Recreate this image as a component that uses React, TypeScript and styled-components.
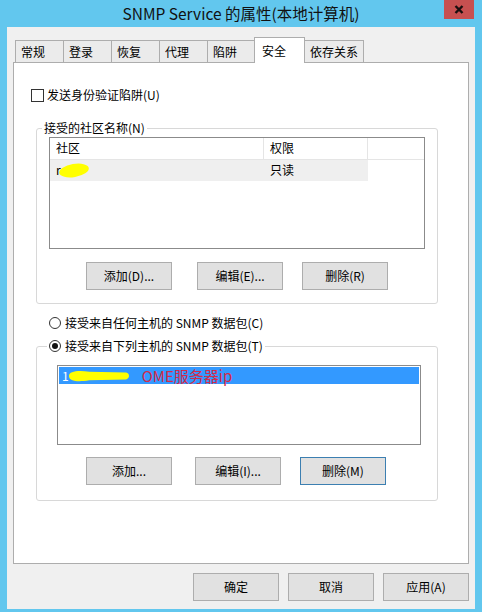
import React from "react";
import styled, { createGlobalStyle } from "styled-components";

const GlobalStyle = createGlobalStyle`
  html, body {
    margin: 0;
    padding: 0;
    width: 482px;
    height: 612px;
    overflow: hidden;
    background: #62c7ee;
  }
  body {
    font-family: "Noto Sans CJK SC", "Noto Sans", sans-serif;
    font-size: 12px;
    color: #000;
  }
  * { box-sizing: border-box; }
`;

const Window = styled.div`
  width: 482px;
  height: 612px;
  background: #62c7ee;
  padding: 0 7px 3px;
  display: flex;
  flex-direction: column;
`;

const TitleBar = styled.div`
  height: 27px;
  display: grid;
  grid-template-columns: 1fr auto 1fr;
  align-items: start;
`;

const Title = styled.div`
  grid-column: 2;
  font-size: 15.5px;
  line-height: 26px;
  color: #111;
  white-space: nowrap;
`;

const CloseButton = styled.div`
  grid-column: 3;
  justify-self: end;
  margin-right: 1px;
  width: 30px;
  height: 19px;
  background: #c75050;
  display: flex;
  align-items: center;
  justify-content: center;
`;

const Client = styled.div`
  flex: 1;
  background: #f0f0f0;
  padding: 10px 6px 8px;
  display: flex;
  flex-direction: column;
`;

const TabStrip = styled.div`
  height: 25px;
  display: flex;
  align-items: flex-end;
  padding-left: 2px;
  position: relative;
  z-index: 1;
`;

const Tab = styled.div<{ $active?: boolean }>`
  position: relative;
  height: ${(p) => (p.$active ? 26 : 22)}px;
  min-width: ${(p) => (p.$active ? 51 : 49)}px;
  margin-left: ${(p) => (p.$active ? -2 : -1)}px;
  margin-bottom: ${(p) => (p.$active ? -1 : 0)}px;
  padding: ${(p) => (p.$active ? "4px 4px 0 7px" : "2px 5px 0 5px")};
  border: 1px solid #adadad;
  border-bottom: none;
  background: ${(p) => (p.$active ? "#ffffff" : "#ebebeb")};
  z-index: ${(p) => (p.$active ? 2 : 0)};
  line-height: 17px;
  white-space: nowrap;
  &:first-child {
    margin-left: 0;
  }
`;

const Panel = styled.div`
  height: 502px;
  border: 1px solid #adadad;
  background: #fff;
  display: flex;
  flex-direction: column;
  padding-top: 24px;
`;

const CheckRow = styled.label`
  display: flex;
  align-items: center;
  gap: 3px;
  height: 16px;
  line-height: 16px;
  padding-left: 17px;
`;

const CheckBox = styled.span`
  width: 13px;
  height: 13px;
  border: 1px solid #333;
  background: #fff;
`;

const Group = styled.fieldset<{ $mt: number }>`
  margin: ${(p) => p.$mt}px 30px 0 22px;
  padding: 0;
  border: 1px solid #d8d8d8;
  border-radius: 3px;
  min-width: 0;
`;

const Legend = styled.legend<{ $ml: number }>`
  margin-left: ${(p) => p.$ml}px;
  padding: 0 2px;
  height: 16px;
  line-height: 16px;
  display: flex;
  align-items: center;
  gap: 4px;
  white-space: nowrap;
`;

const GroupBody = styled.div<{ $pt: number; $pb: number }>`
  padding: ${(p) => p.$pt}px 0 ${(p) => p.$pb}px;
`;

const ListView = styled.div`
  margin: 0 12px;
  height: 112px;
  border: 1px solid #8b8b8b;
  background: #fff;
`;

const LvHeader = styled.div`
  display: flex;
  height: 22px;
  border-bottom: 1px solid #e5e5e5;
`;

const LvRow = styled.div`
  display: flex;
  height: 21px;
`;

const LvCell = styled.div<{ $w: number; $sep?: boolean; $fill?: boolean }>`
  position: relative;
  width: ${(p) => p.$w}px;
  padding-left: 6px;
  line-height: 20px;
  border-right: ${(p) => (p.$sep ? "1px solid #e5e5e5" : "none")};
  background: ${(p) => (p.$fill ? "#efefef" : "transparent")};
`;

const ListBox = styled.div`
  margin: 0 16px 0 20px;
  height: 80px;
  border: 1px solid #8b8b8b;
  background: #fff;
  padding: 1px;
`;

const ListItem = styled.div`
  position: relative;
  height: 17px;
  background: #3399ff;
  color: #fff;
  display: flex;
  align-items: center;
  padding-left: 3px;
  line-height: 17px;
`;

const Annotation = styled.span`
  margin-left: 73px;
  color: #d42a4a;
  font-size: 15px;
  line-height: 17px;
`;

const Redact = styled.svg<{ $l: number; $t: number }>`
  position: absolute;
  left: ${(p) => p.$l}px;
  top: ${(p) => p.$t}px;
  overflow: visible;
`;

const ButtonRow = styled.div<{ $mt: number }>`
  display: flex;
  margin-top: ${(p) => p.$mt}px;
  padding-left: 49px;
`;

const Button = styled.div<{ $ml?: number; $h?: number; $default?: boolean }>`
  width: 86px;
  height: ${(p) => p.$h ?? 28}px;
  margin-left: ${(p) => p.$ml ?? 0}px;
  border: 1px solid ${(p) => (p.$default ? "#3c7fb1" : "#adadad")};
  background: #e1e1e1;
  display: flex;
  align-items: center;
  justify-content: center;
  line-height: 16px;
`;

const RadioRow = styled.label`
  display: flex;
  align-items: center;
  gap: 4px;
  height: 16px;
  line-height: 16px;
  margin-top: 11px;
  padding-left: 35px;
`;

const Radio = styled.span<{ $checked?: boolean }>`
  width: 12px;
  height: 12px;
  border-radius: 50%;
  border: 1px solid #333;
  background: #fff;
  display: flex;
  align-items: center;
  justify-content: center;
  &::after {
    content: "";
    display: ${(p) => (p.$checked ? "block" : "none")};
    width: 6px;
    height: 6px;
    border-radius: 50%;
    background: #111;
  }
`;

const Footer = styled.div`
  margin-top: 9px;
  display: flex;
  justify-content: flex-end;
  gap: 9px;
`;

const tabs = ["常规", "登录", "恢复", "代理", "陷阱", "安全", "依存关系"];

export default function App() {
  return (
    <>
      <GlobalStyle />
      <Window>
        <TitleBar>
          <Title>SNMP Service 的属性(本地计算机)</Title>
          <CloseButton>
            <svg width="10" height="9" viewBox="0 0 10 9">
              <path d="M1.5 1 L8.5 8 M8.5 1 L1.5 8" stroke="#1a0e0e" strokeWidth="2.4" />
            </svg>
          </CloseButton>
        </TitleBar>
        <Client>
          <TabStrip>
            {tabs.map((t) => (
              <Tab key={t} $active={t === "安全"}>
                {t}
              </Tab>
            ))}
          </TabStrip>
          <Panel>
            <CheckRow>
              <CheckBox />
              <span>发送身份验证陷阱(U)</span>
            </CheckRow>

            <Group $mt={17}>
              <Legend $ml={5}>接受的社区名称(N)</Legend>
              <GroupBody $pt={1} $pb={13}>
                <ListView>
                  <LvHeader>
                    <LvCell $w={214} $sep>社区</LvCell>
                    <LvCell $w={104} $sep>权限</LvCell>
                  </LvHeader>
                  <LvRow>
                    <LvCell $w={214} $fill>
                      r
                      <Redact $l={8} $t={2} width="32" height="16" viewBox="0 0 32 16">
                        <ellipse cx="16" cy="8.5" rx="15" ry="6.5" transform="rotate(-10 16 8.5)" fill="#ffff00" />
                      </Redact>
                    </LvCell>
                    <LvCell $w={104} $fill>只读</LvCell>
                  </LvRow>
                </ListView>
                <ButtonRow $mt={13}>
                  <Button>添加(D)...</Button>
                  <Button $ml={25}>编辑(E)...</Button>
                  <Button $ml={19}>删除(R)</Button>
                </ButtonRow>
              </GroupBody>
            </Group>

            <RadioRow>
              <Radio />
              <span>接受来自任何主机的 SNMP 数据包(C)</span>
            </RadioRow>

            <Group $mt={7}>
              <Legend $ml={10}>
                <Radio $checked />
                <span>接受来自下列主机的 SNMP 数据包(T)</span>
              </Legend>
              <GroupBody $pt={11} $pb={15}>
                <ListBox>
                  <ListItem>
                    <span>1</span>
                    <Redact $l={9} $t={2} width="62" height="14" viewBox="0 0 64 14">
                      <path
                        d="M1 7 C1 2 10 1 22 2.5 L60 3.5 C64 4 64 10 60 10.5 L22 11.5 C10 13.5 1 12.5 1 7 Z"
                        fill="#ffff00"
                      />
                    </Redact>
                    <Annotation>OME服务器ip</Annotation>
                  </ListItem>
                </ListBox>
                <ButtonRow $mt={12}>
                  <Button>添加...</Button>
                  <Button $ml={23}>编辑(I)...</Button>
                  <Button $ml={19} $default>删除(M)</Button>
                </ButtonRow>
              </GroupBody>
            </Group>
          </Panel>
          <Footer>
            <Button>确定</Button>
            <Button>取消</Button>
            <Button>应用(A)</Button>
          </Footer>
        </Client>
      </Window>
    </>
  );
}
